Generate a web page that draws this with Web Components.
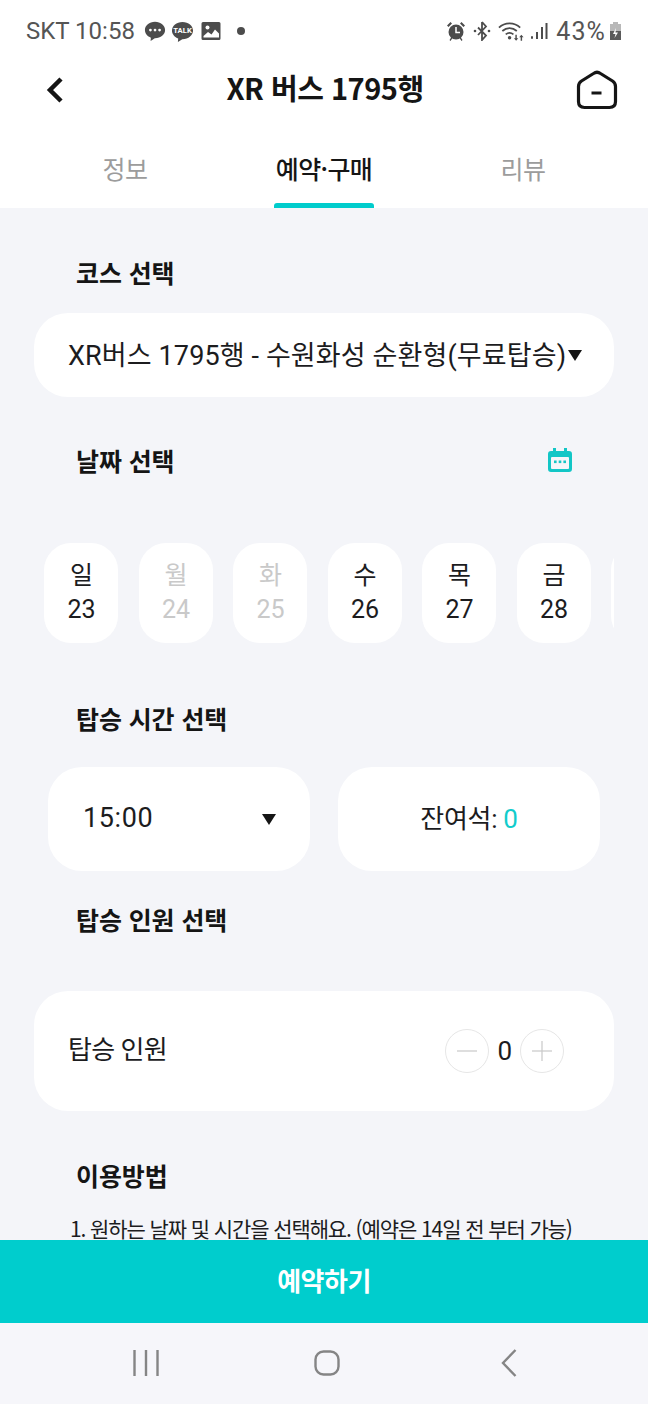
<!DOCTYPE html>
<html lang="ko">
<head>
<meta charset="utf-8">
<title>XR 버스 1795행</title>
<style>
    html, body { margin: 0; padding: 0; }
    body {
        width: 648px;
        height: 1404px;
        overflow: hidden;
        display: flex;
        flex-direction: column;
        font-family: "Noto Sans CJK KR", "Noto Sans", sans-serif;
        color: #1c1c1e;
        background: #f4f5f9;
    }
    main { flex: 1; min-height: 0; overflow: hidden; padding-top: 48px; }
</style>
</head>
<body>

<template id="status-bar">
    <style>
        :host {
            display: flex;
            align-items: center;
            height: 60px;
            box-sizing: border-box;
            padding: 2px 26px 0 26px;
            background: white;
            color: #555;
            font-family: Roboto, sans-serif;
            font-size: 24px;
        }
        .left, .right { display: flex; align-items: center; }
        .right { margin-left: auto; }
        svg { display: block; fill: #4c4c4c; }
    </style>
    <div class="left">
        <span>SKT 10:58</span>
        <svg style="margin-left:9px" width="22" height="22" viewBox="0 0 24 24"><path d="M12 2C5.700 2 1 6 1 11c0 4 3 7 6.500 8.300L7.200 23l4.600-3H12c6.300 0 11-4 11-9S18.300 2 12 2z"/><circle cx="7" cy="11" r="1.500" fill="#fff"/><circle cx="12" cy="11" r="1.500" fill="#fff"/><circle cx="17" cy="11" r="1.500" fill="#fff"/></svg>
        <svg style="margin-left:5px" width="23" height="23" viewBox="0 0 24 24"><path d="M12 2C5.700 2 1 6 1 11c0 4 3 7 6.500 8.300L7.200 23l4.600-3H12c6.300 0 11-4 11-9S18.300 2 12 2z"/><text x="12" y="14" text-anchor="middle" font-family="Roboto" font-size="8" font-weight="700" fill="#fff">TALK</text></svg>
        <svg style="margin-left:7px" width="20" height="20" viewBox="0 0 20 20"><path d="M2 1h16a1.500 1.500 0 0 1 1.500 1.500v15A1.500 1.500 0 0 1 18 19H2a1.500 1.500 0 0 1-1.500-1.500v-15A1.500 1.500 0 0 1 2 1z"/><path fill="#fff" d="M2.500 15l4.500-4 3.500 2.500 3.500-5 4 4v4h-15.500z"/><circle cx="6.500" cy="6.500" r="2" fill="#fff"/></svg>
        <svg style="margin-left:16px" width="8" height="8" viewBox="0 0 8 8"><circle cx="4" cy="4" r="4"/></svg>
    </div>
    <div class="right">
        <svg width="20" height="20" viewBox="0 0 20 20"><circle cx="10" cy="11" r="7.500"/><path fill="none" stroke="#fff" stroke-width="1.500" d="M10 6v5.500h4"/><path d="M1 4.500L4.500 1 6 2.500 2.500 6zM19 4.500L15.500 1 14 2.500 17.500 6zM3.500 19l2-3 1 1-2 3zM16.500 19l-2-3-1 1 2 3z"/></svg>
        <svg style="margin-left:7px" width="18" height="20" viewBox="0 0 18 20"><path fill="none" stroke="#4c4c4c" stroke-width="1.800" d="M9 1v18l4-4.500L5 6.500M9 1l4 4.500L5 14"/><circle cx="2" cy="10" r="1.300"/><circle cx="16" cy="10" r="1.300"/></svg>
        <svg style="margin-left:7px" width="27" height="22" viewBox="0 0 28 22"><g fill="none" stroke="#4c4c4c" stroke-width="1.800"><path d="M1 7.500C7 1.500 17 1.500 23 7.500"/><path d="M4.500 11c4.500-4 10.500-4 15 0"/><path d="M8 14.500c2.500-2 5.500-2 8 0"/></g><circle cx="12" cy="18" r="1.800"/><path d="M18 15h1.500v3.500H21L18.800 21 16.500 18.500H18zM25 21h-1.500v-3.500H22l2.200-2.500 2.300 2.500H25z"/></svg>
        <svg style="margin-left:5px" width="18" height="20" viewBox="0 0 18 20"><rect x="1" y="15" width="2" height="3" rx="1"/><rect x="6" y="11" width="2" height="7"/><rect x="11" y="6" width="2" height="12"/><rect x="15.500" y="2" width="2" height="16"/></svg>
        <span style="margin-left:8px;font-size:25px;letter-spacing:1.1px">43%</span>
        <svg style="margin-left:3px" width="13" height="20" viewBox="0 0 13 20"><path fill="#b8b8b8" d="M4 1h5v2h3v16H1V3h3z"/><path fill="#5a5a5a" d="M1 10h11v9H1z"/><path fill="#fff" d="M7 7l-3 6h2.500L5.500 17 9 11.500H6.500z"/></svg>
    </div>
</template>

<template id="app-header">
    <style>
        :host {
            display: flex;
            align-items: center;
            justify-content: space-between;
            height: 60px;
            padding: 0 30px 0 46px;
            background: white;
        }
        .title {
            flex: 1;
            text-align: center;
            font-size: 29px;
            font-weight: 700;
            letter-spacing: -0.5px;
            padding-left: 10px;
            margin-top: -6px;
            color: #151515;
        }
        svg { display: block; }
    </style>
    <svg width="18" height="28" viewBox="0 0 18 28"><path d="M15 3L4 14l11 11" fill="none" stroke="#151515" stroke-width="4.500"/></svg>
    <div class="title"><slot></slot></div>
    <svg width="42" height="40" viewBox="0 0 42 40"><path d="M17.500 3.500Q21 1 24.500 3.500L36.500 11Q39.500 13 39.500 16.500V31.500C39.500 35.500 37.500 37.500 33.500 37.500H8.500C4.500 37.500 2.500 35.500 2.500 31.500V16.500Q2.500 13 5.500 11z" fill="none" stroke="#151515" stroke-width="3.200" stroke-linejoin="round"/><path d="M15.500 23h10" stroke="#151515" stroke-width="3"/></svg>
</template>

<template id="tab-bar">
    <style>
        :host {
            display: grid;
            grid-template-columns: 100px 100px 100px;
            justify-content: space-between;
            height: 88px;
            padding: 0 75px;
            background: white;
        }
    </style>
    <slot></slot>
</template>

<template id="tab-item">
    <style>
        :host {
            display: flex;
            flex-direction: column;
            align-items: center;
            height: 88px;
            font-size: 25px;
            font-weight: 400;
            letter-spacing: -0.6px;
            color: #9c9c9c;
            white-space: nowrap;
        }
        .label { margin-top: 28px; line-height: 40px; }
        .bar {
            width: 100px;
            height: 5px;
            margin-top: auto;
            border-radius: 3px 3px 0 0;
        }
        :host([active]) {
            color: #151515;
            font-weight: 500;
        }
        :host([active]) .bar { background: #00cccc; }
    </style>
    <span class="label"><slot></slot></span>
    <span class="bar"></span>
</template>

<template id="section-title">
    <style>
        :host {
            display: flex;
            justify-content: space-between;
            align-items: center;
            margin-left: 76px;
            margin-right: 76px;
            padding-bottom: 4px;
            font-size: 25px;
            line-height: 32px;
            font-weight: 700;
            letter-spacing: -0.1px;
            color: #151515;
        }
    </style>
    <slot></slot>
    <slot name="action"></slot>
</template>

<template id="white-card">
    <style>
        :host {
            display: flex;
            align-items: center;
            box-sizing: border-box;
            background: white;
            border-radius: 34px;
            font-family: Roboto, "Noto Sans CJK KR", sans-serif;
            font-size: 27px;
            color: #1c1c1e;
        }
    </style>
    <slot></slot>
</template>

<template id="date-chip">
    <style>
        :host {
            flex: 0 0 74px;
            display: flex;
            flex-direction: column;
            align-items: center;
            justify-content: center;
            box-sizing: border-box;
            height: 100px;
            padding: 0 0 1px 1px;
            background: white;
            border-radius: 27px;
            font-family: Roboto, "Noto Sans CJK KR", sans-serif;
            font-size: 25px;
            line-height: 34px;
            color: #1c1c1e;
        }
        :host([disabled]) { color: #c9c9c9; }
    </style>
    <slot></slot>
</template>

<template id="count-button">
    <style>
        :host {
            display: block;
            width: 44px;
            height: 44px;
        }
        svg { display: block; }
    </style>
    <svg width="44" height="44" viewBox="0 0 44 44">
        <circle cx="22" cy="22" r="21.500" fill="none" stroke="#e6e6e6"/>
        <path d="M12 22h20" stroke="#c8c8c8" stroke-width="1.200"/>
        <path id="bar" d="M22 12v20" stroke="#c8c8c8" stroke-width="1.200"/>
    </svg>
</template>

<template id="reserve-button">
    <style>
        :host {
            display: flex;
            justify-content: center;
            align-items: center;
            flex: 0 0 83px;
            box-sizing: border-box;
            padding-bottom: 4px;
            background: #00cdcd;
            color: white;
            font-size: 26px;
            font-weight: 700;
            letter-spacing: -0.5px;
        }
    </style>
    <slot></slot>
</template>

<template id="nav-bar">
    <style>
        :host {
            display: grid;
            grid-template-columns: repeat(3, 181.5px);
            justify-content: center;
            align-items: center;
            justify-items: center;
            flex: 0 0 81px;
            box-sizing: border-box;
            padding: 0 0 2px 6px;
            background: #f6f6fa;
        }
        svg { display: block; fill: none; stroke: #858585; stroke-width: 2.400; }
    </style>
    <svg width="26" height="26" viewBox="0 0 26 26"><path d="M1.500 0v26M13 0v26M24.500 0v26"/></svg>
    <svg width="26" height="26" viewBox="0 0 26 26"><rect x="1.500" y="1.500" width="23" height="23" rx="8"/></svg>
    <svg width="16" height="28" viewBox="0 0 16 28"><path d="M14.500 1L2 14l12.500 13"/></svg>
</template>

<script>
    // every element here just stamps its template into an open shadow root
    class TemplateElement extends HTMLElement {
        constructor() {
            super();
            const template = document.getElementById(this.localName);
            this.attachShadow({ mode: "open" }).appendChild(template.content.cloneNode(true));
        }
    }

    class CountButton extends TemplateElement {
        connectedCallback() {
            // minus has no vertical bar
            if (this.getAttribute("kind") === "minus") {
                this.shadowRoot.getElementById("bar").remove();
            }
        }
    }

    ["status-bar", "app-header", "tab-bar", "tab-item", "section-title", "white-card", "date-chip", "reserve-button", "nav-bar"]
        .forEach(name => customElements.define(name, class extends TemplateElement {}));
    customElements.define("count-button", CountButton);
</script>

<status-bar></status-bar>
<app-header>XR 버스 1795행</app-header>
<tab-bar>
    <tab-item>정보</tab-item>
    <tab-item active>예약·구매</tab-item>
    <tab-item>리뷰</tab-item>
</tab-bar>

<main>
    <section-title>코스 선택</section-title>

    <white-card style="margin:21px 34px 0;height:84px;padding:0 32px 4px 34px;justify-content:space-between;white-space:nowrap;letter-spacing:.12px">
        <span>XR버스 1795행 - 수원화성 순환형(무료탑승)</span>
        <svg width="14" height="11" viewBox="0 0 14 11" style="flex:none;margin-top:4px"><path d="M0 0h14L7 11z" fill="#151515"/></svg>
    </white-card>

    <section-title style="margin-top:47px">날짜 선택
        <svg slot="action" width="24" height="26" viewBox="0 0 24 26"><path fill="#12c6c6" d="M5 1h3v3h8V1h3v3h2a3 3 0 0 1 3 3v15a3 3 0 0 1-3 3H3a3 3 0 0 1-3-3V7a3 3 0 0 1 3-3h2z"/><rect x="3" y="10" width="18" height="12" rx="1" fill="#f4f5f9"/><g fill="#12c6c6"><rect x="6" y="13.500" width="2.600" height="2.600"/><rect x="10.700" y="13.500" width="2.600" height="2.600"/><rect x="15.400" y="13.500" width="2.600" height="2.600"/></g></svg>
    </section-title>

    <div style="display:flex;gap:20.5px;margin:63px 34px 0 44px;overflow:hidden">
        <date-chip><span>일</span><span>23</span></date-chip>
        <date-chip disabled><span>월</span><span>24</span></date-chip>
        <date-chip disabled><span>화</span><span>25</span></date-chip>
        <date-chip><span>수</span><span>26</span></date-chip>
        <date-chip><span>목</span><span>27</span></date-chip>
        <date-chip><span>금</span><span>28</span></date-chip>
        <date-chip></date-chip>
    </div>

    <section-title style="margin-top:59px">탑승 시간 선택</section-title>

    <div style="display:grid;grid-template-columns:262px 262px;gap:28px;margin:29px 0 0 48px">
        <white-card style="height:104px;padding:0 34px 2px 35px;justify-content:space-between;letter-spacing:.6px">
            <span>15:00</span>
            <svg width="14" height="11" viewBox="0 0 14 11" style="margin-top:2px"><path d="M0 0h14L7 11z" fill="#151515"/></svg>
        </white-card>
        <white-card style="height:104px;padding-bottom:5px;justify-content:center;font-size:26px;letter-spacing:-0.3px">
            <span>잔여석: <span style="color:#12cccc">0</span></span>
        </white-card>
    </div>

    <section-title style="margin-top:32px">탑승 인원 선택</section-title>

    <white-card style="margin:52px 34px 0;height:120px;padding:0 50px 0 34px;justify-content:space-between;font-size:26px">
        <span style="margin-top:-8px;letter-spacing:-0.6px">탑승 인원</span>
        <span style="display:flex;align-items:center;gap:8px">
            <count-button kind="minus"></count-button>
            <span>0</span>
            <count-button kind="plus"></count-button>
        </span>
    </white-card>

    <section-title style="margin-top:48px">이용방법</section-title>

    <div style="margin:17px 0 0 70px;font-size:21px;line-height:32px;letter-spacing:-1.1px;white-space:nowrap;color:#1c1c1e">1. 원하는 날짜 및 시간을 선택해요. (예약은 14일 전 부터 가능)</div>
</main>

<reserve-button>예약하기</reserve-button>
<nav-bar></nav-bar>

</body>
</html>
